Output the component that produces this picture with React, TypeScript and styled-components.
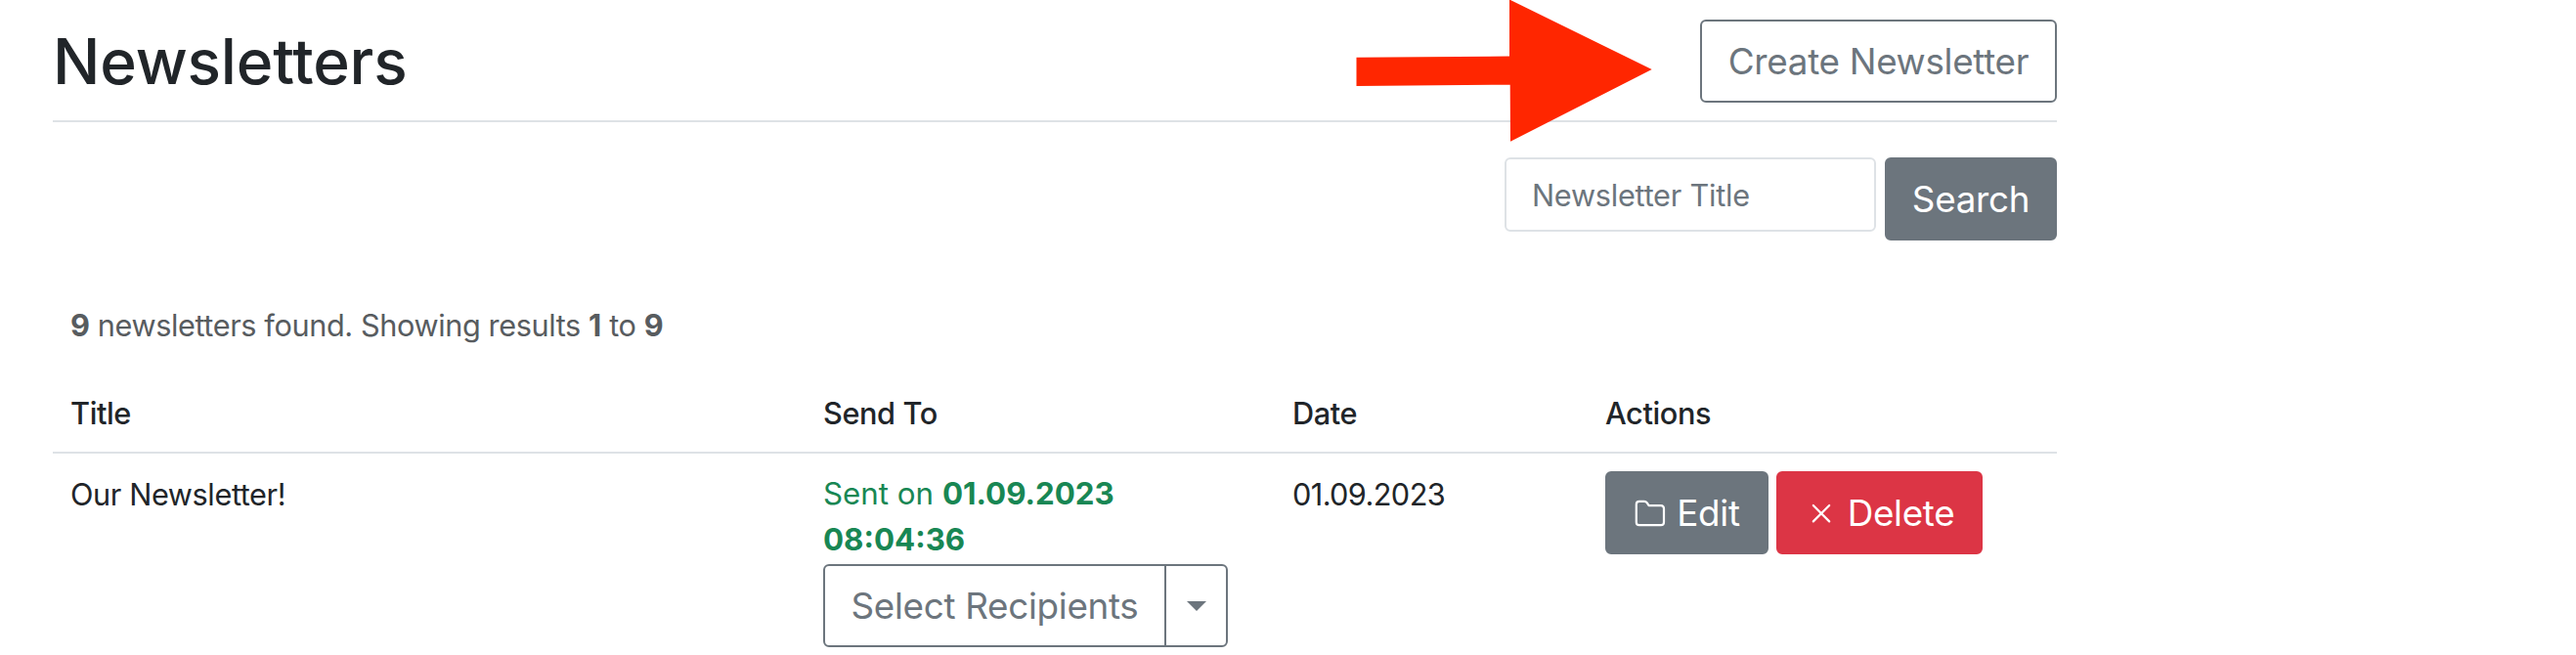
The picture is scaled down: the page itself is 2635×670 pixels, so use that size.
import React, { ReactElement } from "react";
import styled, { createGlobalStyle, css } from "styled-components";

type ButtonVariant = "outline" | "secondary" | "danger";

type NewsletterType = {
  id: number;
  title: string;
  sentDate: string;
  sentTime: string;
  date: string;
};

const COLORS = {
  text: "#212529",
  muted: "#585c5f",
  secondary: "#6c757d",
  danger: "#dc3545",
  success: "#198754",
  border: "#dee2e6",
  arrow: "#ff2600",
};

const newsletters: NewsletterType[] = [
  {
    id: 1,
    title: "Our Newsletter!",
    sentDate: "01.09.2023",
    sentTime: "08:04:36",
    date: "01.09.2023",
  },
];

const FolderIcon = () => (
  <StyledIcon viewBox="0 0 34 34">
    <path d="M2.8 8V26.2Q2.8 29.2 5.8 29.2H28Q31 29.2 31 26.2V12.2Q31 9.2 28 9.2H15.6L13.6 6.2Q12.6 4.8 11 4.8H5.8Q2.8 4.8 2.8 8Z" />
  </StyledIcon>
);

const CrossIcon = () => (
  <StyledIcon viewBox="0 0 34 34">
    <path d="M8.8 9L25.2 25.4M25.2 9L8.8 25.4" />
  </StyledIcon>
);

function NewsletterRow({
  title,
  sentDate,
  sentTime,
  date,
}: NewsletterType): ReactElement {
  return (
    <tr>
      <StyledCell>{title}</StyledCell>
      <StyledCell>
        <StyledSent>
          Sent on{" "}
          <strong>
            {sentDate} {sentTime}
          </strong>
        </StyledSent>
        <StyledButtonGroup>
          <StyledButton $variant="outline" $width={351}>
            Select Recipients
          </StyledButton>
          <StyledToggle
            $variant="outline"
            $width={65}
            aria-label="Toggle dropdown"
          >
            <StyledCaret />
          </StyledToggle>
        </StyledButtonGroup>
      </StyledCell>
      <StyledDateCell>{date}</StyledDateCell>
      <StyledCell>
        <StyledActions>
          <StyledButton $variant="secondary" $width={167}>
            <FolderIcon />
            Edit
          </StyledButton>
          <StyledButton $variant="danger" $width={211}>
            <CrossIcon />
            Delete
          </StyledButton>
        </StyledActions>
      </StyledCell>
    </tr>
  );
}

function App(): ReactElement {
  return (
    <>
      <GlobalStyle />
      <StyledPage>
        <StyledHeader>
          <StyledHeading>Newsletters</StyledHeading>
          <StyledButton $variant="outline" $width={365}>
            Create Newsletter
          </StyledButton>
        </StyledHeader>
        <StyledSearch onSubmit={(e) => e.preventDefault()}>
          <StyledInput type="text" placeholder="Newsletter Title" />
          <StyledButton $variant="secondary" $width={176}>
            Search
          </StyledButton>
        </StyledSearch>
        <StyledSummary>
          <strong>9</strong> newsletters found. Showing results{" "}
          <strong>1</strong> to <strong>9</strong>
        </StyledSummary>
        <StyledTable>
          <thead>
            <tr>
              <StyledHeadCell $width={770}>Title</StyledHeadCell>
              <StyledHeadCell $width={480}>Send To</StyledHeadCell>
              <StyledHeadCell $width={320}>Date</StyledHeadCell>
              <StyledHeadCell $width={480}>Actions</StyledHeadCell>
            </tr>
          </thead>
          <tbody>
            {newsletters.map((item) => (
              <NewsletterRow key={item.id} {...item} />
            ))}
          </tbody>
        </StyledTable>
        <StyledArrow viewBox="0 0 304 146">
          <polygon points="1.5,58.7 158,57.5 158,-0.5 303.7,71 159,144.7 158.7,86.7 1.5,88" />
        </StyledArrow>
      </StyledPage>
    </>
  );
}

export default App;

const GlobalStyle = createGlobalStyle`
  * {
    box-sizing: border-box;
  }

  body {
    margin: 0;
    background-color: #fff;
    color: ${COLORS.text};
    font-family: Inter, "Liberation Sans", sans-serif;
    font-size: 30.7px;
    line-height: 47px;
    letter-spacing: -0.4px;
  }

  button,
  input {
    font-family: inherit;
    margin: 0;
  }

  strong {
    font-weight: 700;
  }
`;

const StyledPage = styled.main`
  position: relative;
  width: 2104px;
  height: 670px;
  padding-left: 54px;
  overflow: hidden;
`;

const StyledHeader = styled.header`
  display: flex;
  justify-content: space-between;
  align-items: flex-start;
  height: 125px;
  padding-top: 20px;
  border-bottom: 2px solid ${COLORS.border};
`;

const StyledHeading = styled.h1`
  margin: 4px 0 0;
  font-size: 64px;
  font-weight: 500;
  line-height: 77px;
  letter-spacing: -0.15px;
`;

const StyledSearch = styled.form`
  display: flex;
  justify-content: flex-end;
  align-items: flex-start;
  gap: 9px;
  margin-top: 36px;
`;

const StyledInput = styled.input`
  width: 380px;
  height: 76px;
  padding: 0 26px;
  border: 2px solid ${COLORS.border};
  border-radius: 6px;
  background-color: #fff;
  font-size: 30.7px;
  letter-spacing: -0.25px;

  &::placeholder {
    color: ${COLORS.secondary};
    opacity: 1;
  }
`;

const StyledButton = styled.button<{
  $variant: ButtonVariant;
  $width: number;
}>`
  display: inline-flex;
  align-items: center;
  justify-content: center;
  width: ${({ $width }) => $width}px;
  height: 85px;
  padding: 0;
  border: 2px solid ${COLORS.secondary};
  border-radius: 6px;
  background-color: ${COLORS.secondary};
  color: #fff;
  font-size: 36.8px;
  line-height: 54px;
  letter-spacing: -0.3px;
  white-space: nowrap;
  cursor: pointer;

  ${({ $variant }) =>
    $variant === "outline" &&
    css`
      background-color: transparent;
      color: ${COLORS.secondary};
    `}

  ${({ $variant }) =>
    $variant === "danger" &&
    css`
      border-color: ${COLORS.danger};
      background-color: ${COLORS.danger};
    `}
`;

const StyledToggle = styled(StyledButton)``;

const StyledCaret = styled.span`
  border-top: 10px solid ${COLORS.secondary};
  border-left: 10px solid transparent;
  border-right: 10px solid transparent;
`;

const StyledButtonGroup = styled.div`
  display: flex;

  ${StyledButton}:first-child {
    border-top-right-radius: 0;
    border-bottom-right-radius: 0;
  }

  ${StyledToggle} {
    margin-left: -2px;
    border-top-left-radius: 0;
    border-bottom-left-radius: 0;
  }
`;

const StyledSummary = styled.p`
  margin: 63px 18px 0;
  color: ${COLORS.muted};
`;

const StyledTable = styled.table`
  width: 100%;
  margin-top: 24px;
  border-collapse: separate;
  border-spacing: 0;
  table-layout: fixed;
`;

const StyledHeadCell = styled.th<{ $width: number }>`
  width: ${({ $width }) => $width}px;
  padding: 19px 18px 16px;
  border-bottom: 2px solid ${COLORS.border};
  font-weight: 500;
  text-align: left;
`;

const StyledCell = styled.td`
  padding: 18px;
  vertical-align: top;
`;

const StyledDateCell = styled(StyledCell)`
  letter-spacing: -0.6px;
`;

const StyledSent = styled.div`
  width: 360px;
  margin-bottom: 1px;
  color: ${COLORS.success};
  font-size: 31.3px;
  letter-spacing: 0;
`;

const StyledActions = styled.div`
  display: flex;
  gap: 8px;
`;

const StyledIcon = styled.svg`
  width: 34px;
  height: 34px;
  margin-right: 10px;
  fill: none;
  stroke: currentColor;
  stroke-width: 2.2;
  stroke-linecap: round;
  stroke-linejoin: round;
`;

const StyledArrow = styled.svg`
  position: absolute;
  top: 0;
  left: 1386px;
  width: 304px;
  height: 146px;
  fill: ${COLORS.arrow};
  pointer-events: none;
`;
